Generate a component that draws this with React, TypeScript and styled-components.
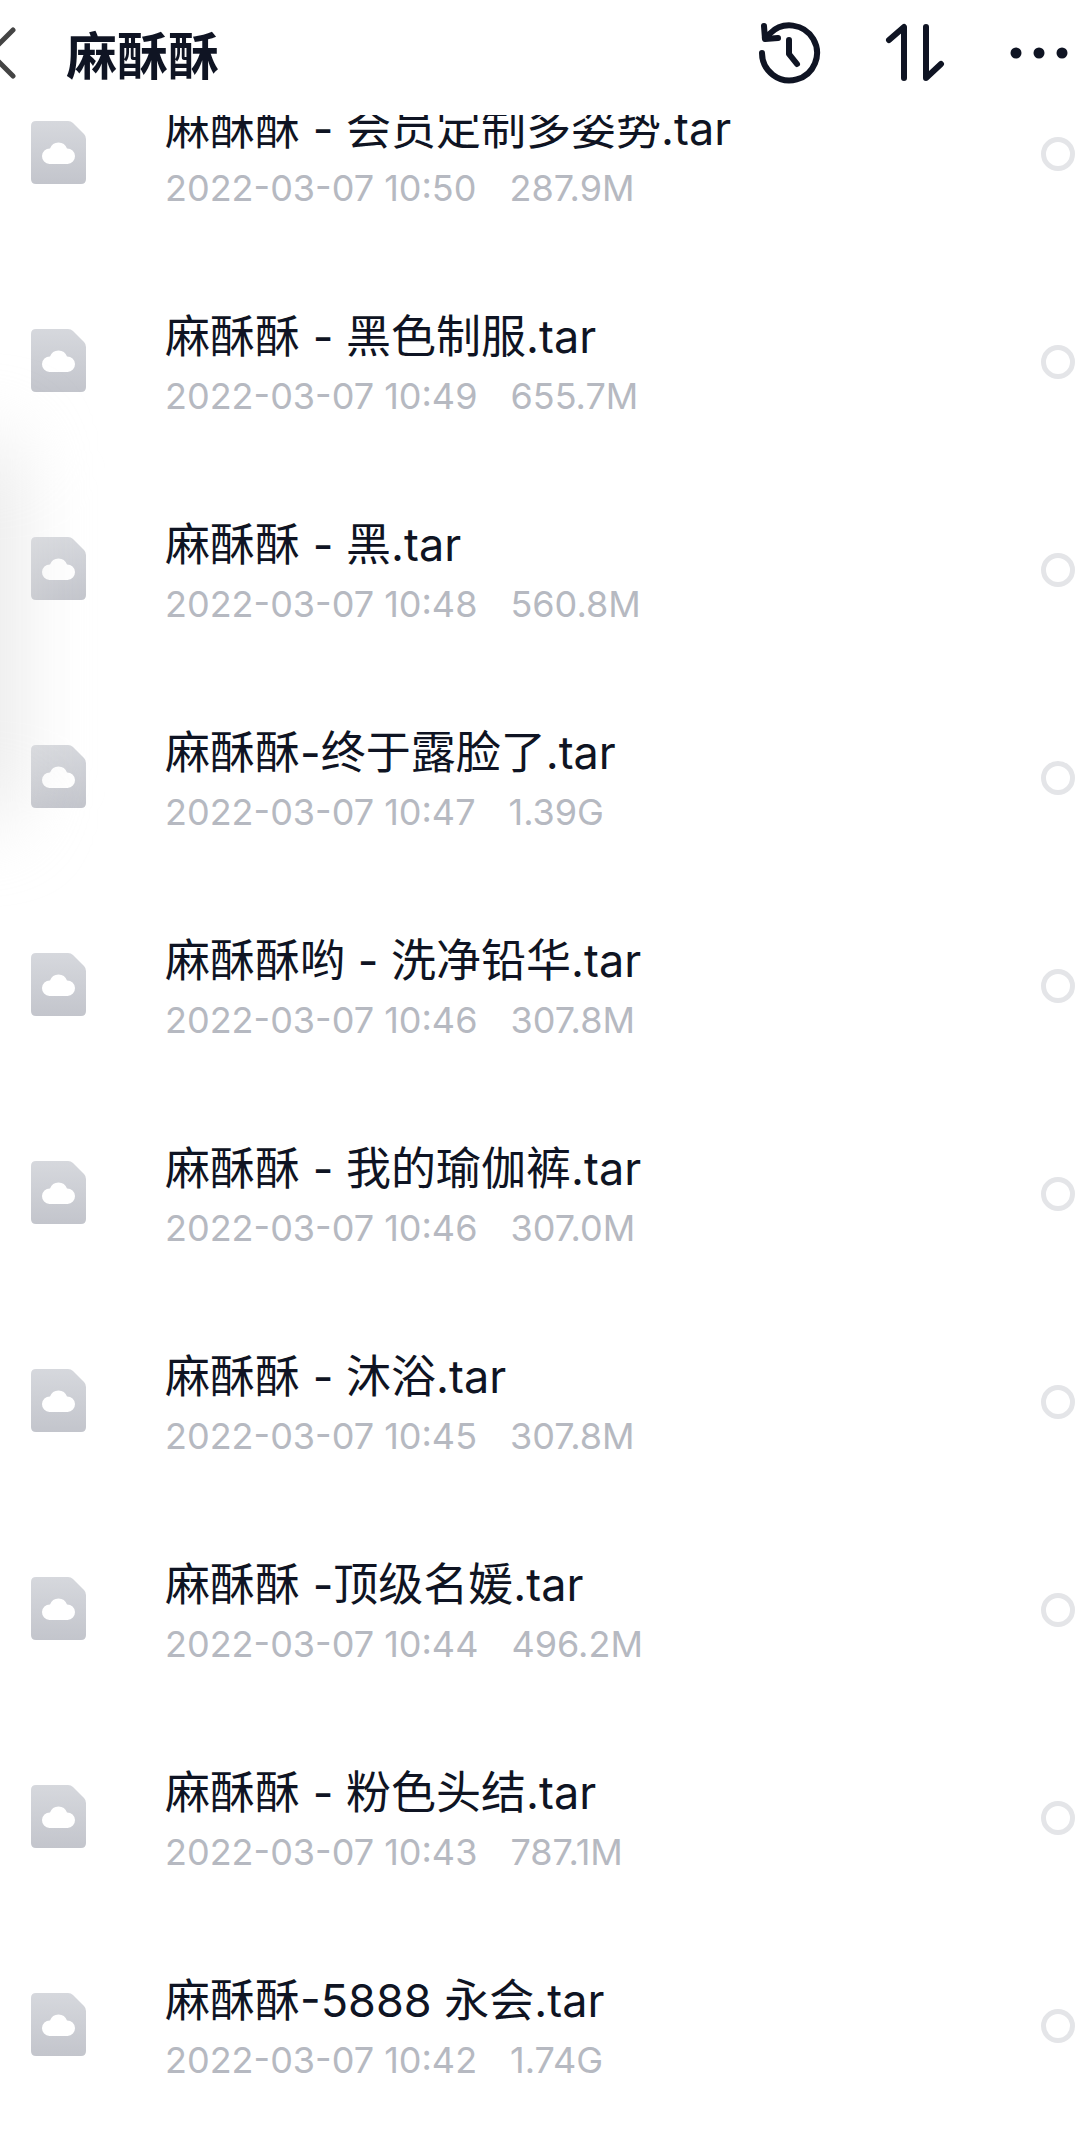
import { createGlobalStyle, styled } from "styled-components";

const files = [
  { name: "麻酥酥 - 会员定制多姿势.tar", time: "2022-03-07 10:50", size: "287.9M" },
  { name: "麻酥酥 - 黑色制服.tar", time: "2022-03-07 10:49", size: "655.7M" },
  { name: "麻酥酥 - 黑.tar", time: "2022-03-07 10:48", size: "560.8M" },
  { name: "麻酥酥-终于露脸了.tar", time: "2022-03-07 10:47", size: "1.39G" },
  { name: "麻酥酥哟 - 洗净铅华.tar", time: "2022-03-07 10:46", size: "307.8M" },
  { name: "麻酥酥 - 我的瑜伽裤.tar", time: "2022-03-07 10:46", size: "307.0M" },
  { name: "麻酥酥 - 沐浴.tar", time: "2022-03-07 10:45", size: "307.8M" },
  { name: "麻酥酥 -顶级名媛.tar", time: "2022-03-07 10:44", size: "496.2M" },
  { name: "麻酥酥 - 粉色头结.tar", time: "2022-03-07 10:43", size: "787.1M" },
  { name: "麻酥酥-5888 永会.tar", time: "2022-03-07 10:42", size: "1.74G" },
];

export default function App() {
  return (
    <>
      <GlobalStyle />
      <Page>
        <Header>
          <BackIcon viewBox="0 0 18 90">
            <path d="M13 22 L-10 45 L13 68" />
          </BackIcon>
          <Title>麻酥酥</Title>
          <Actions>
            <ActionIcon width="64" height="64" viewBox="0 0 64 64">
              <path d="M5 32 A27.5 27.5 0 1 0 13 12.5 L8 17" />
              <path d="M7 5 L8 18 L21 17" />
              <path d="M32 19 V33 L40 43" />
            </ActionIcon>
            <SortIcon width="60" height="60" viewBox="0 0 60 60">
              <path d="M4 17 L19 4 V55" />
              <path d="M41 4 V55 L56 41" />
            </SortIcon>
            <DotsIcon width="58" height="14" viewBox="0 0 58 14">
              <circle cx="6" cy="7" r="5.5" />
              <circle cx="29" cy="7" r="5.5" />
              <circle cx="52" cy="7" r="5.5" />
            </DotsIcon>
          </Actions>
        </Header>
        <List>
          {files.map((file) => (
            <Row key={file.name}>
              <FileIcon width="55" height="63" viewBox="0 0 55 63">
                <defs>
                  <linearGradient id="fileFill" x1="0" y1="0" x2="0" y2="1">
                    <stop offset="0" stopColor="#d6d8dd" />
                    <stop offset="1" stopColor="#c3c5cc" />
                  </linearGradient>
                </defs>
                <path
                  d="M5 0 H37 Q40 0 42 2 L53 13 Q55 15 55 18 V58 Q55 63 50 63 H5 Q0 63 0 58 V5 Q0 0 5 0 Z"
                  fill="url(#fileFill)"
                />
                <path
                  d="M18.5 43 A7.5 7.5 0 0 1 19 27.5 A9 9 0 0 1 36 27.5 A7.5 7.5 0 0 1 36.5 43 Z"
                  fill="#ffffff"
                />
              </FileIcon>
              <Info>
                <Name>{file.name}</Name>
                <Meta>
                  <span>{file.time}</span>
                  <span>{file.size}</span>
                </Meta>
              </Info>
              <Radio />
            </Row>
          ))}
        </List>
        <EdgeShadow />
      </Page>
    </>
  );
}

const GlobalStyle = createGlobalStyle`
  html, body {
    margin: 0;
    padding: 0;
    background: #ffffff;
  }
`;

const Page = styled.div`
  position: relative;
  width: 1091px;
  height: 2131px;
  overflow: hidden;
  background: #ffffff;
  font-family: Inter, "Noto Sans CJK SC", sans-serif;
`;

const Header = styled.div`
  position: relative;
  z-index: 2;
  display: flex;
  align-items: center;
  height: 106px;
  padding-bottom: 9px;
  background: #ffffff;
`;

const BackIcon = styled.svg`
  width: 18px;
  height: 90px;
  flex: none;
  fill: none;
  stroke: #444444;
  stroke-width: 5;
  stroke-linecap: round;
  stroke-linejoin: round;
`;

const Title = styled.div`
  margin-left: 48px;
  font-size: 51px;
  font-weight: 700;
  color: #0f1423;
`;

const Actions = styled.div`
  display: flex;
  align-items: center;
  margin-left: auto;
  padding-right: 23px;
`;

const ActionIcon = styled.svg`
  margin-right: 64px;
  fill: none;
  stroke: #0f1423;
  stroke-width: 6;
  stroke-linecap: round;
  stroke-linejoin: round;
`;

const SortIcon = styled(ActionIcon)`
  margin-right: 65px;
`;

const DotsIcon = styled.svg`
  fill: #0f1423;
`;

const List = styled.div`
  position: relative;
  z-index: 1;
  margin-top: -66px;
`;

const Row = styled.div`
  display: flex;
  align-items: center;
  height: 208px;
  padding: 0 16px 0 31px;
`;

const FileIcon = styled.svg`
  flex: none;
  margin-bottom: 1px;
`;

const Info = styled.div`
  display: flex;
  flex-direction: column;
  margin-left: 79px;
  padding-top: 3px;
`;

const Name = styled.div`
  font-size: 45px;
  line-height: 58px;
  color: #0f1423;
  white-space: pre;
`;

const Meta = styled.div`
  display: flex;
  gap: 33px;
  margin-top: 9px;
  font-size: 36px;
  line-height: 42px;
  color: #b6b9c1;
`;

const Radio = styled.div`
  width: 34px;
  height: 34px;
  box-sizing: border-box;
  margin: 1px 0 0 auto;
  border: 5.5px solid #e4e5e8;
  border-radius: 50%;
`;

const EdgeShadow = styled.div`
  position: absolute;
  z-index: 3;
  left: -50px;
  top: 440px;
  width: 60px;
  height: 380px;
  border-radius: 30px;
  background: #e2e2e2;
  filter: blur(40px);
  pointer-events: none;
`;
